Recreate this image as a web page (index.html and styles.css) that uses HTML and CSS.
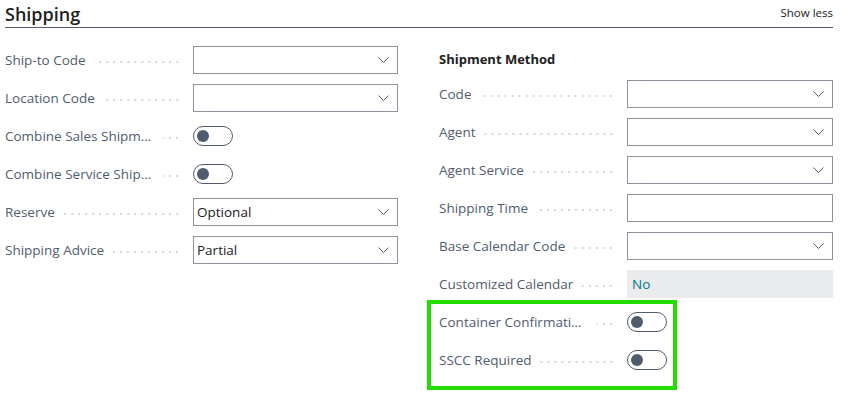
FILE: index.html
```html
<!DOCTYPE html>
<html lang="en">
<head>
    <meta charset="UTF-8">
    <meta name="viewport" content="width=device-width, initial-scale=1.0">
    <title>Shipping</title>
    <link rel="stylesheet" href="styles.css">
</head>
<body>

<div class="page">
    <header class="group-header">
        <h1>Shipping</h1>
        <a class="show-less" href="#">Show less</a>
    </header>

    <div class="columns">
        <!-- left column -->
        <div class="column">
            <div class="field">
                <div class="caption"><span class="caption-text">Ship-to Code</span><span class="leader"></span></div>
                <div class="input select"><span class="value"></span><svg class="chevron" width="11" height="6" viewBox="0 0 11 6"><polyline points="0.5,0.5 5.5,5.5 10.5,0.5"/></svg></div>
            </div>
            <div class="field">
                <div class="caption"><span class="caption-text">Location Code</span><span class="leader"></span></div>
                <div class="input select"><span class="value"></span><svg class="chevron" width="11" height="6" viewBox="0 0 11 6"><polyline points="0.5,0.5 5.5,5.5 10.5,0.5"/></svg></div>
            </div>
            <div class="field">
                <div class="caption"><span class="caption-text">Combine Sales Shipment</span><span class="leader"></span></div>
                <div class="toggle-cell"><span class="toggle"><span class="knob"></span></span></div>
            </div>
            <div class="field">
                <div class="caption"><span class="caption-text">Combine Service Shipment</span><span class="leader"></span></div>
                <div class="toggle-cell"><span class="toggle"><span class="knob"></span></span></div>
            </div>
            <div class="field">
                <div class="caption"><span class="caption-text">Reserve</span><span class="leader"></span></div>
                <div class="input select"><span class="value">Optional</span><svg class="chevron" width="11" height="6" viewBox="0 0 11 6"><polyline points="0.5,0.5 5.5,5.5 10.5,0.5"/></svg></div>
            </div>
            <div class="field">
                <div class="caption"><span class="caption-text">Shipping Advice</span><span class="leader"></span></div>
                <div class="input select"><span class="value">Partial</span><svg class="chevron" width="11" height="6" viewBox="0 0 11 6"><polyline points="0.5,0.5 5.5,5.5 10.5,0.5"/></svg></div>
            </div>
        </div>

        <!-- right column -->
        <div class="column">
            <h2 class="sub-group">Shipment Method</h2>
            <div class="field">
                <div class="caption"><span class="caption-text">Code</span><span class="leader"></span></div>
                <div class="input select"><span class="value"></span><svg class="chevron" width="11" height="6" viewBox="0 0 11 6"><polyline points="0.5,0.5 5.5,5.5 10.5,0.5"/></svg></div>
            </div>
            <div class="field">
                <div class="caption"><span class="caption-text">Agent</span><span class="leader"></span></div>
                <div class="input select"><span class="value"></span><svg class="chevron" width="11" height="6" viewBox="0 0 11 6"><polyline points="0.5,0.5 5.5,5.5 10.5,0.5"/></svg></div>
            </div>
            <div class="field">
                <div class="caption"><span class="caption-text">Agent Service</span><span class="leader"></span></div>
                <div class="input select"><span class="value"></span><svg class="chevron" width="11" height="6" viewBox="0 0 11 6"><polyline points="0.5,0.5 5.5,5.5 10.5,0.5"/></svg></div>
            </div>
            <div class="field">
                <div class="caption"><span class="caption-text">Shipping Time</span><span class="leader"></span></div>
                <div class="input"><span class="value"></span></div>
            </div>
            <div class="field">
                <div class="caption"><span class="caption-text">Base Calendar Code</span><span class="leader"></span></div>
                <div class="input select"><span class="value"></span><svg class="chevron" width="11" height="6" viewBox="0 0 11 6"><polyline points="0.5,0.5 5.5,5.5 10.5,0.5"/></svg></div>
            </div>
            <div class="field">
                <div class="caption"><span class="caption-text">Customized Calendar</span><span class="leader"></span></div>
                <div class="readonly"><a href="#">No</a></div>
            </div>
            <div class="highlight">
                <div class="field">
                    <div class="caption"><span class="caption-text">Container Confirmation Required</span><span class="leader"></span></div>
                    <div class="toggle-cell"><span class="toggle"><span class="knob"></span></span></div>
                </div>
                <div class="field">
                    <div class="caption"><span class="caption-text">SSCC Required</span><span class="leader"></span></div>
                    <div class="toggle-cell"><span class="toggle"><span class="knob"></span></span></div>
                </div>
            </div>
        </div>
    </div>
</div>

</body>
</html>
```

FILE: styles.css
```css
body {
    font-family: "Segoe UI", "Open Sans", sans-serif;
    font-size: 13.5px;
    color: #212121;
    margin: 0;
    padding: 0;
    background-color: #fff;
}
.page {
    padding: 0 10px 0 5px;
}
.group-header {
    display: flex;
    justify-content: space-between;
    align-items: flex-end;
    height: 27px;
    border-bottom: 1px solid #505c6d;
}
.group-header h1 {
    margin: 0;
    font-size: 18px;
    font-weight: 600;
    line-height: 26px;
    color: #212121;
}
.show-less {
    font-size: 11.5px;
    line-height: 14px;
    margin-bottom: 7px;
    color: #212121;
    text-decoration: none;
}
.columns {
    display: grid;
    grid-template-columns: 393px 394px;
    column-gap: 41px;
    padding-top: 18px;
}
.column {
    display: flex;
    flex-direction: column;
    gap: 10px;
}
.sub-group {
    margin: 0 0 -2px 0;
    font-size: 13px;
    font-weight: 700;
    line-height: 26px;
}
.field {
    display: grid;
    grid-template-columns: 188px 1fr;
    height: 28px;
    align-items: center;
}
.caption {
    display: flex;
    align-items: center;
    padding-right: 10px;
    color: #505c6d;
    min-width: 0;
}
.caption-text {
    white-space: nowrap;
    overflow: hidden;
    text-overflow: ellipsis;
    max-width: 150px;
    line-height: 20px;
}
.leader {
    flex: 1;
    min-width: 18px;
    height: 2px;
    margin: 3px 0 0 8px;
    background-image: linear-gradient(to right, #d3d6da 2px, transparent 2px);
    background-size: 7px 2px;
    background-position: right center;
    background-repeat: repeat-x;
}
.input {
    height: 28px;
    box-sizing: border-box;
    border: 1px solid #8c939d;
    display: flex;
    align-items: center;
    justify-content: space-between;
    padding: 0 8px 0 3px;
}
.value {
    color: #212121;
}
.chevron {
    fill: none;
    stroke: #505c6d;
    stroke-width: 1;
}
.readonly {
    height: 28px;
    background-color: #eaebec;
    display: flex;
    align-items: center;
    padding-left: 5px;
}
.readonly a {
    color: #00788e;
    text-decoration: none;
}
.toggle-cell {
    display: flex;
    align-items: center;
}
.toggle {
    width: 40px;
    height: 20px;
    box-sizing: border-box;
    border: 1px solid #505c6d;
    border-radius: 10px;
    display: flex;
    align-items: center;
    padding-left: 3px;
}
.knob {
    width: 12px;
    height: 12px;
    border-radius: 50%;
    background-color: #505c6d;
}
.highlight {
    display: flex;
    flex-direction: column;
    gap: 10px;
    margin: -8px 0 0 -12px;
    padding: 4px 0 12px 8px;
    width: 234px;
    border: 4px solid #22dd00;
}
.highlight .field {
    grid-template-columns: 188px 46px;
}
```
